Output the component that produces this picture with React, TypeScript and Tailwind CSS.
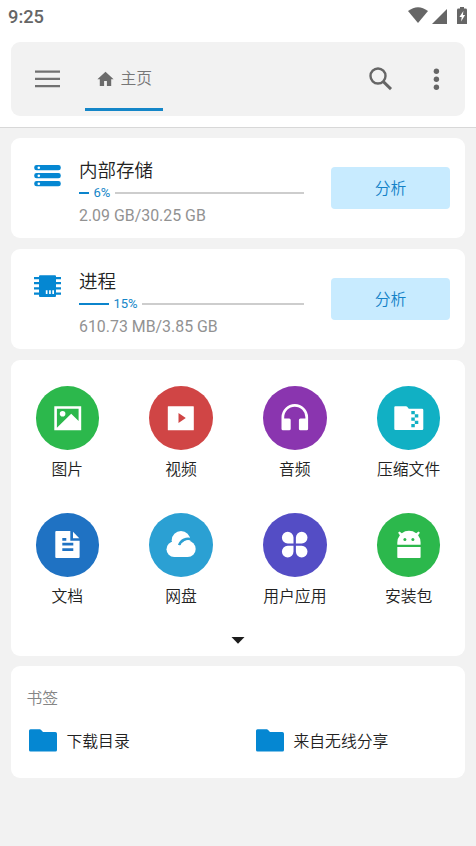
import type { ReactNode } from "react";

const font = "font-[Roboto,'Noto_Sans_CJK_SC',sans-serif]";

function StatusBar() {
  return (
    <div className="flex h-[42px] items-start justify-between pl-[8px] pr-[8px] text-[#666]">
      <span className="mt-[4px] text-[18.3px] font-medium leading-[25px]">9:25</span>
      <svg className="mt-[6px] h-[20px] w-[62px] fill-[#666]" viewBox="0 0 62 20">
        <path d="M2 5Q12 -2.6 22 5L12 17Z" />
        <path d="M26 18L41 3v15z" />
        <path
          fillRule="evenodd"
          d="M54 2.500V1h4v1.500h1.600A1.400 1.400 0 0 1 61 3.900V18H51V3.900a1.400 1.400 0 0 1 1.400-1.400zM57.400 5l-4 6h2.300l-.6 4.500 4-6.400h-2.200z"
        />
      </svg>
    </div>
  );
}

function Toolbar() {
  return (
    <div className="mx-[11px] flex h-[74px] items-center rounded-[9px] bg-[#f2f2f2]">
      <svg className="ml-[23px] h-[20px] w-[26px] fill-[#717171]" viewBox="0 0 26 20">
        <path d="M1 1.500h25v2.300H1zM1 8.700h25V11H1zM1 15.900h25v2.300H1z" />
      </svg>
      <div className="ml-[25px] flex h-full w-[78px] flex-col">
        <div className="mt-[24px] flex h-[26px] items-center pl-[11.500px]">
          <svg className="h-[16px] w-[17px] fill-[#6c6c6c]" viewBox="0 0 17 16">
            <path d="M8.500 .8L.4 8.200h2.400V15h4.300v-5h2.800v5h4.300V8.200h2.400z" />
          </svg>
          <span className="ml-[7px] whitespace-nowrap text-[15.800px] font-[350] leading-[26px] text-[#777]">主页</span>
        </div>
        <div className="mb-[5px] mt-auto h-[3px] shrink-0 bg-[#1486c8]" />
      </div>
      <svg className="ml-auto h-[26px] w-[26px] fill-none stroke-[#666]" viewBox="0 0 26 26">
        <circle cx="11" cy="10" r="7.500" strokeWidth="2.400" />
        <path d="M16.300 15.600l7.700 7.500" strokeWidth="2.900" />
      </svg>
      <svg className="ml-[38px] mr-[23px] h-[24px] w-[11px] fill-[#666]" viewBox="0 0 11 24">
        <circle cx="5.400" cy="4.300" r="2.700" />
        <circle cx="5.400" cy="12.300" r="2.700" />
        <circle cx="5.400" cy="20.300" r="2.700" />
      </svg>
    </div>
  );
}

type UsageProps = {
  icon: ReactNode;
  title: string;
  percent: string;
  filled: number;
  detail: string;
};

function UsageCard({ icon, title, percent, filled, detail }: UsageProps) {
  return (
    <section className="flex h-[100px] rounded-[9px] bg-white">
      <div className="ml-[23px] mt-[26px] w-[45px]">{icon}</div>
      <div className="mt-[19px] w-[225px]">
        <h2 className="text-[18.500px] font-[350] leading-[28px] text-[#222]">{title}</h2>
        <div className="mt-px flex h-[13px] items-center">
          <div className="h-[2px] bg-[#0b84cc]" style={{ width: filled }} />
          <span className="mx-[4.500px] text-[13px] leading-[13px] text-[#1486c8]">{percent}</span>
          <div className="h-[2px] flex-1 bg-[#cdcdcd]" />
        </div>
        <p className="mt-[6px] whitespace-nowrap text-[15.900px] leading-[22px] text-[#929292]">{detail}</p>
      </div>
      <button className="ml-[27px] mt-[29px] h-[42px] w-[119px] rounded-[4px] bg-[#c8ebff] pt-px text-[15.800px] font-[350] text-[#1482c8]">
        分析
      </button>
    </section>
  );
}

const storageIcon = (
  <svg className="mt-[27px] h-[22px] w-[27px] -translate-y-[26px]" viewBox="0 0 27 22">
    {[0.1, 8.1, 16.1].map((y) => (
      <g key={y}>
        <rect x="0.200" y={y} width="26.600" height="5.200" rx="2.400" fill="#0587d2" />
        <circle cx="4.800" cy={y + 2.6} r="1.300" fill="#fff" />
      </g>
    ))}
  </svg>
);

const chipIcon = (
  <svg className="h-[23px] w-[27px]" viewBox="0 0 27 23">
    <path
      fill="#0587d2"
      d="M6 .2h15a1 1 0 0 1 1 1V2h5v2.200h-5v2.900h5v2.200h-5v2.900h5v2.200h-5v3.200h5v2.200h-5V21a1 1 0 0 1-1 1H6a1 1 0 0 1-1-1v-1.200H0v-2.200h5v-3.200H0v-2.200h5V9.300H0V7.100h5V4.200H0V2h5v-.8a1 1 0 0 1 1-1z"
    />
    <path fill="#fff" d="M11.800 15.200h1.700v3.900h-1.700zM15.100 15.200h1.700v3.900h-1.700zM18.300 15.200H20v3.900h-1.700z" />
  </svg>
);

const categories: { label: string; color: string; art: ReactNode }[] = [
  {
    label: "图片",
    color: "bg-[#2cb84c]",
    art: (
      <>
        <path fillRule="evenodd" d="M18.300 20.200h26.900v24H18.300zM20.900 22.800v18.900l14.300-14 7.400 7.200V22.800z" />
        <circle cx="26.600" cy="27.800" r="2.800" />
      </>
    ),
  },
  {
    label: "视频",
    color: "bg-[#d04545]",
    art: (
      <path
        fillRule="evenodd"
        d="M19.300 20.200h25a.5.5 0 0 1 .5.5v23a.5.5 0 0 1-.5.5h-25a.5.5 0 0 1-.5-.5v-23a.5.5 0 0 1 .5-.5zM29.500 27v10l7.300-5z"
      />
    ),
  },
  {
    label: "音频",
    color: "bg-[#8a35af]",
    art: (
      <path d="M18.500 31.300a13.300 13.300 0 0 1 26.600 0v11.400a1.500 1.500 0 0 1-1.500 1.500h-6.200a1.500 1.500 0 0 1-1.500-1.500v-8.700a1.500 1.500 0 0 1 1.500-1.500h5v-1.200a10.600 10.600 0 0 0-21.200 0v1.200h5a1.500 1.500 0 0 1 1.500 1.500v8.700a1.500 1.500 0 0 1-1.500 1.500H20a1.500 1.500 0 0 1-1.500-1.500z" />
    ),
  },
  {
    label: "压缩文件",
    color: "bg-[#11b0c4]",
    art: (
      <>
        <path d="M18.300 20.200H29a1.500 1.500 0 0 1 1.200.6l1.600 2h13.300a1.200 1.200 0 0 1 1.200 1.200v18.800a1.200 1.200 0 0 1-1.200 1.200H18.500a1.200 1.200 0 0 1-1.200-1.200V21.200a1 1 0 0 1 1-1z" />
        <path
          fill="#11b0c4"
          d="M34.300 24.900h3.500v3.300h3.500v3.300h-3.500v-3.300h-3.500zM34.300 31.500h3.500v3.200h3.500V38h-3.500v-3.300h-3.500zM34.300 38h3.500v3.300h-3.500z"
        />
      </>
    ),
  },
  {
    label: "文档",
    color: "bg-[#1f72c3]",
    art: (
      <>
        <path
          fillRule="evenodd"
          d="M20.300 18h14v9.700h9.300V44a1 1 0 0 1-1 1H20.300a1 1 0 0 1-1-1V19a1 1 0 0 1 1-1zM26.300 25v2.800h4V25zM26.300 29.800v2.700h11v-2.700zM26.300 35.300V38h11v-2.700z"
        />
        <path d="M37 18.800v6.400h6.300z" />
      </>
    ),
  },
  {
    label: "网盘",
    color: "bg-[#2ba0d3]",
    art: (
      <>
        <circle cx="32" cy="27.300" r="9.300" />
        <circle cx="25.200" cy="36.300" r="7.700" />
        <path d="M30.200 32.200A9.500 9.500 0 0 1 42.500 26.400" fill="none" stroke="#2ba0d3" strokeWidth="2.600" />
        <circle cx="38.600" cy="35.900" r="8.100" />
        <path d="M25.200 33h13.400v11H25.200z" />
      </>
    ),
  },
  {
    label: "用户应用",
    color: "bg-[#544dc5]",
    art: (
      <path d="M24.700 18.800a5.800 5.800 0 0 1 5.800 5.800v5.800h-5.800a5.800 5.800 0 0 1 0-11.600zM38.700 18.800a5.800 5.800 0 1 1 0 11.600h-5.800v-5.800a5.800 5.800 0 0 1 5.800-5.800zM24.700 32.800h5.800v5.800a5.800 5.800 0 1 1-5.800-5.800zM32.900 32.800h5.800a5.800 5.800 0 1 1-5.800 5.800z" />
    ),
  },
  {
    label: "安装包",
    color: "bg-[#2cb84c]",
    art: (
      <>
        <path d="M20.300 31.800v-2.300a11.600 11.600 0 0 1 2.600-7.200l-1.800-2.500 1.400-1.200 2.300 1.700a11.700 11.700 0 0 1 14.400 0l2.300-1.700 1.400 1.200-1.800 2.500a11.600 11.600 0 0 1 2.500 7.200v2.300zM20.300 34h23.300v10.200a.8.800 0 0 1-.8.800H21.100a.8.800 0 0 1-.8-.8z" />
        <circle cx="27.900" cy="26.400" r="1.500" fill="#2cb84c" />
        <circle cx="35.900" cy="26.400" r="1.500" fill="#2cb84c" />
      </>
    ),
  },
];

function Categories() {
  return (
    <section className="flex h-[296px] flex-col items-center rounded-[9px] bg-white pt-[26px]">
      <div className="grid w-[455px] grid-cols-4">
        {categories.map(({ label, color, art }) => (
          <div key={label} className="flex h-[127px] flex-col items-center">
            <div className={`h-[63.5px] w-[63.5px] shrink-0 rounded-full ${color}`}>
              <svg className="h-full w-full fill-white" viewBox="0 0 63.5 63.5">
                {art}
              </svg>
            </div>
            <span className="mt-[8px] text-[15.800px] font-[350] leading-[24px] text-[#222]">{label}</span>
          </div>
        ))}
      </div>
      <svg className="mt-[-3px] h-[7px] w-[14px] fill-[#1c1c1c]" viewBox="0 0 14 7">
        <path d="M.5 0h13L7 6.700z" />
      </svg>
    </section>
  );
}

function Bookmark({ label }: { label: string }) {
  return (
    <div className="flex items-center">
      <svg className="mb-px h-[23px] w-[28px] fill-[#0587d2]" viewBox="0 0 28 23">
        <path d="M1.500 .3h9.300a1.500 1.500 0 0 1 1.100.5L14 3h12.300A1.700 1.700 0 0 1 28 4.700v16.200a1.600 1.600 0 0 1-1.600 1.600H1.600A1.600 1.600 0 0 1 0 20.900V1.800A1.500 1.500 0 0 1 1.500 .3z" />
      </svg>
      <span className="ml-[9.500px] mt-px text-[15.800px] font-[350] leading-[24px] text-[#222]">{label}</span>
    </div>
  );
}

export default function App() {
  return (
    <div className={`h-[846px] w-[476px] overflow-hidden bg-[#f2f2f2] ${font}`}>
      <header className="h-[128px] border-b border-[#d8d8d8] bg-white">
        <StatusBar />
        <Toolbar />
      </header>
      <main className="flex flex-col px-[11px] pt-[10px]">
        <UsageCard icon={storageIcon} title="内部存储" percent="6%" filled={10} detail="2.09 GB/30.25 GB" />
        <div className="mb-[11px] mt-[11px]">
          <UsageCard icon={chipIcon} title="进程" percent="15%" filled={30} detail="610.73 MB/3.85 GB" />
        </div>
        <Categories />
        <section className="mt-[10px] h-[112px] rounded-[9px] bg-white pt-[21px]">
          <h3 className="ml-[15.500px] text-[15.800px] font-[350] leading-[24px] text-[#858585]">书签</h3>
          <div className="mt-[17.500px] grid grid-cols-2 pl-[18px]">
            <Bookmark label="下载目录" />
            <div className="ml-[9px]">
              <Bookmark label="来自无线分享" />
            </div>
          </div>
        </section>
      </main>
    </div>
  );
}
